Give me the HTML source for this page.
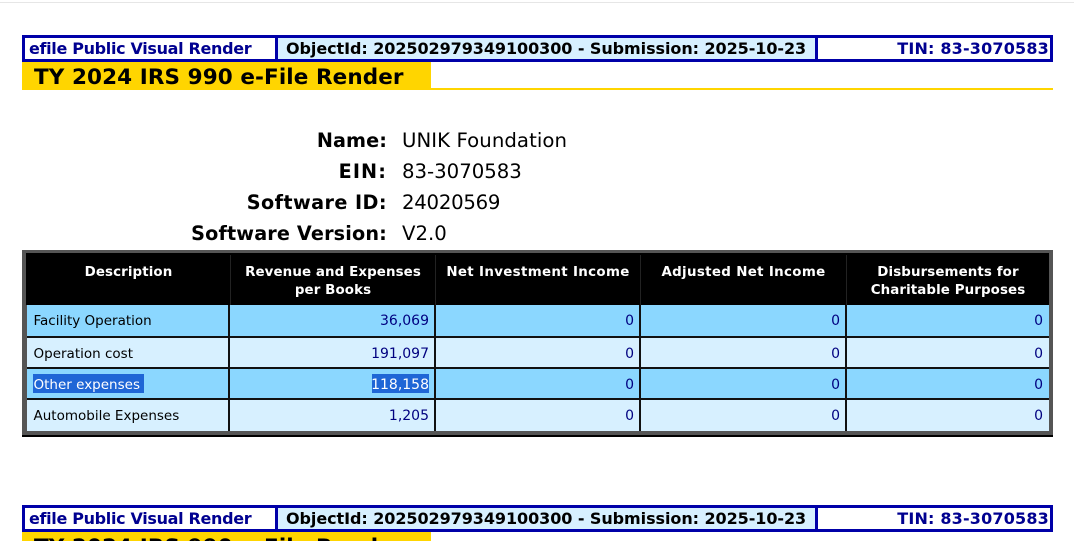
<!DOCTYPE html>
<html><head><meta charset="utf-8"><style>
html,body{margin:0;padding:0;background:#fff;width:1074px;height:541px;overflow:hidden}
body{position:relative;font-family:"DejaVu Sans","Liberation Sans",sans-serif}
.r{position:absolute}
.t{position:absolute;white-space:nowrap;line-height:20px}
.hb{font-weight:bold;font-size:16px;height:20px}
.lab{font-weight:bold;font-size:19.2px;right:687px;letter-spacing:.1px}
.val{font-size:19.7px;left:402px;color:#000}
.th{font-weight:bold;font-size:13.4px;color:#fff;text-align:center;line-height:17.5px;white-space:normal;letter-spacing:.1px}
.d{font-size:13.5px;color:#000;left:33.5px}
.n{font-size:14px;color:#000080}
</style></head><body>
<div class="r" style="left:0;top:2px;width:1074px;height:1px;background:#e6e6e6"></div>

<div class="r" style="left:22px;top:35px;width:1031px;height:27px;background:#0000a8"></div>
<div class="r" style="left:25px;top:38px;width:250px;height:21px;background:#fff"></div>
<div class="r" style="left:278px;top:38px;width:537px;height:21px;background:#d7f0ff"></div>
<div class="r" style="left:818px;top:38px;width:232px;height:21px;background:#fff"></div>
<div class="t hb" style="left:29px;top:39px;color:#000090;letter-spacing:-.33px">efile Public Visual Render</div>
<div class="t hb" style="left:286px;top:39px;color:#000;letter-spacing:-.07px">ObjectId: 202502979349100300 - Submission: 2025-10-23</div>
<div class="t hb" style="right:25px;top:39px;color:#000090;letter-spacing:.18px">TIN: 83-3070583</div>
<div class="r" style="left:22px;top:62px;width:409px;height:28px;background:#ffd500"></div>
<div class="r" style="left:431px;top:88px;width:622px;height:2px;background:#ffd500"></div>
<div class="t" style="left:34px;top:67px;font-weight:bold;font-size:21.5px;line-height:22px;color:#000;letter-spacing:.09px">TY 2024 IRS 990 e-File Render</div>

<div class="t lab" style="top:131px">Name:</div><div class="t val" style="top:131px;letter-spacing:.07px">UNIK Foundation</div>
<div class="t lab" style="top:162px;letter-spacing:1.1px">EIN:</div><div class="t val" style="top:162px">83-3070583</div>
<div class="t lab" style="top:193px;letter-spacing:.43px">Software ID:</div><div class="t val" style="top:193px;letter-spacing:-.25px">24020569</div>
<div class="t lab" style="top:224px;letter-spacing:.16px">Software Version:</div><div class="t val" style="top:224px">V2.0</div>

<div class="r" style="left:22px;top:250px;width:1031px;height:187px;background:#555"></div>
<div class="r" style="left:26px;top:253px;width:1023px;height:52px;background:#000"></div>
<div class="r" style="left:22px;top:435px;width:1031px;height:2px;background:#000"></div>
<div class="r" style="left:27px;top:305px;width:1022px;height:126px;background:#111"></div>

<div class="r" style="left:27px;top:305px;width:201px;height:31px;background:#8bd7ff"></div>
<div class="r" style="left:230px;top:305px;width:204px;height:31px;background:#8bd7ff"></div>
<div class="r" style="left:436px;top:305px;width:203px;height:31px;background:#8bd7ff"></div>
<div class="r" style="left:641px;top:305px;width:204px;height:31px;background:#8bd7ff"></div>
<div class="r" style="left:847px;top:305px;width:202px;height:31px;background:#8bd7ff"></div>

<div class="r" style="left:27px;top:338px;width:201px;height:29px;background:#d7f0ff"></div>
<div class="r" style="left:230px;top:338px;width:204px;height:29px;background:#d7f0ff"></div>
<div class="r" style="left:436px;top:338px;width:203px;height:29px;background:#d7f0ff"></div>
<div class="r" style="left:641px;top:338px;width:204px;height:29px;background:#d7f0ff"></div>
<div class="r" style="left:847px;top:338px;width:202px;height:29px;background:#d7f0ff"></div>

<div class="r" style="left:27px;top:369px;width:201px;height:29px;background:#8bd7ff"></div>
<div class="r" style="left:230px;top:369px;width:204px;height:29px;background:#8bd7ff"></div>
<div class="r" style="left:436px;top:369px;width:203px;height:29px;background:#8bd7ff"></div>
<div class="r" style="left:641px;top:369px;width:204px;height:29px;background:#8bd7ff"></div>
<div class="r" style="left:847px;top:369px;width:202px;height:29px;background:#8bd7ff"></div>

<div class="r" style="left:27px;top:400px;width:201px;height:31px;background:#d7f0ff"></div>
<div class="r" style="left:230px;top:400px;width:204px;height:31px;background:#d7f0ff"></div>
<div class="r" style="left:436px;top:400px;width:203px;height:31px;background:#d7f0ff"></div>
<div class="r" style="left:641px;top:400px;width:204px;height:31px;background:#d7f0ff"></div>
<div class="r" style="left:847px;top:400px;width:202px;height:31px;background:#d7f0ff"></div>

<div class="r" style="left:230px;top:255px;width:1px;height:50px;background:#222"></div>
<div class="r" style="left:435px;top:255px;width:1px;height:50px;background:#222"></div>
<div class="r" style="left:640px;top:255px;width:1px;height:50px;background:#222"></div>
<div class="r" style="left:846px;top:255px;width:1px;height:50px;background:#222"></div>

<div class="t th" style="left:27px;width:203px;top:264px">Description</div>
<div class="t th" style="left:231px;width:204px;top:264px">Revenue and Expenses<br>per Books</div>
<div class="t th" style="left:436px;width:204px;top:264px;letter-spacing:.33px">Net Investment Income</div>
<div class="t th" style="left:641px;width:205px;top:264px;letter-spacing:.33px">Adjusted Net Income</div>
<div class="t th" style="left:847px;width:202px;top:264px">Disbursements for<br>Charitable Purposes</div>

<div class="t d" style="top:311px">Facility Operation</div>
<div class="t d" style="top:344px">Operation cost</div>
<div class="r" style="left:33px;top:374px;width:111px;height:19px;background:#1f66d6"></div>
<div class="t d" style="top:375px;color:#fff">Other expenses</div>
<div class="t d" style="top:406px">Automobile Expenses</div>

<div class="t n" style="right:645px;top:311px">36,069</div>
<div class="t n" style="right:645px;top:344px">191,097</div>
<div class="r" style="left:372px;top:374px;width:57px;height:19px;background:#1f66d6"></div>
<div class="t n" style="right:645px;top:375px;color:#fff">118,158</div>
<div class="t n" style="right:645px;top:406px">1,205</div>

<div class="t n" style="right:440px;top:311px">0</div>
<div class="t n" style="right:440px;top:344px">0</div>
<div class="t n" style="right:440px;top:375px">0</div>
<div class="t n" style="right:440px;top:406px">0</div>
<div class="t n" style="right:234px;top:311px">0</div>
<div class="t n" style="right:234px;top:344px">0</div>
<div class="t n" style="right:234px;top:375px">0</div>
<div class="t n" style="right:234px;top:406px">0</div>
<div class="t n" style="right:31px;top:311px">0</div>
<div class="t n" style="right:31px;top:344px">0</div>
<div class="t n" style="right:31px;top:375px">0</div>
<div class="t n" style="right:31px;top:406px">0</div>

<div class="r" style="left:22px;top:505px;width:1031px;height:27px;background:#0000a8"></div>
<div class="r" style="left:25px;top:508px;width:250px;height:21px;background:#fff"></div>
<div class="r" style="left:278px;top:508px;width:537px;height:21px;background:#d7f0ff"></div>
<div class="r" style="left:818px;top:508px;width:232px;height:21px;background:#fff"></div>
<div class="t hb" style="left:29px;top:509px;color:#000090;letter-spacing:-.33px">efile Public Visual Render</div>
<div class="t hb" style="left:286px;top:509px;color:#000;letter-spacing:-.07px">ObjectId: 202502979349100300 - Submission: 2025-10-23</div>
<div class="t hb" style="right:25px;top:509px;color:#000090;letter-spacing:.18px">TIN: 83-3070583</div>
<div class="r" style="left:22px;top:532px;width:409px;height:9px;background:#ffd500;overflow:hidden"><div class="t" style="left:12px;top:5px;font-weight:bold;font-size:21.5px;line-height:22px;color:#000;letter-spacing:.09px">TY 2024 IRS 990 e-File Render</div></div>
</body></html>
